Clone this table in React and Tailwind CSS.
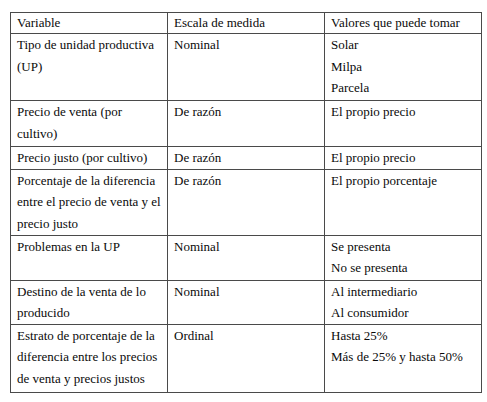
import React from "react";

const rows = [
  [["Tipo de unidad productiva (UP)"], ["Nominal"], ["Solar", "Milpa", "Parcela"]],
  [["Precio de venta (por cultivo)"], ["De razón"], ["El propio precio"]],
  [["Precio justo (por cultivo)"], ["De razón"], ["El propio precio"]],
  [["Porcentaje de la diferencia entre el precio de venta y el precio justo"], ["De razón"], ["El propio porcentaje"]],
  [["Problemas en la UP"], ["Nominal"], ["Se presenta", "No se presenta"]],
  [["Destino de la venta de lo producido"], ["Nominal"], ["Al intermediario", "Al consumidor"]],
  [["Estrato de porcentaje de la diferencia entre los precios de venta y precios justos"], ["Ordinal"], ["Hasta 25%", "Más de 25% y hasta 50%"]],
];

const rowHeights = ["h-[67px]", "h-[46px]", "h-[22px]", "h-[66px]", "h-[45px]", "h-[44px]", "h-[68px]"];

export default function App() {
  return (
    <div className="w-[487px] h-[402px] bg-white pt-[12px] pl-[10px] text-[13px] text-[#0a0a0a] font-['Liberation_Serif','Times_New_Roman',serif]">
      <table className="border-collapse table-fixed w-[471px] font-['Liberation_Serif','Times_New_Roman',serif]">
        <colgroup>
          <col className="w-[157px]" />
          <col className="w-[157px]" />
          <col className="w-[157px]" />
        </colgroup>
        <thead>
          <tr className="h-[21px]">
            <th className="border border-[#4a4a4a] font-normal text-left align-middle pl-[6px] pr-[4px] leading-[20px]">Variable</th>
            <th className="border border-[#4a4a4a] font-normal text-left align-middle pl-[6px] pr-[4px] leading-[20px]">Escala de medida</th>
            <th className="border border-[#4a4a4a] font-normal text-left align-middle pl-[6px] pr-[4px] leading-[20px]">Valores que puede tomar</th>
          </tr>
        </thead>
        <tbody>
          {rows.map((r, i) => (
            <tr key={i} className={rowHeights[i]}>
              {r.map((cell, j) => (
                <td key={j} className="border border-[#4a4a4a] align-top pl-[6px] pr-[4px] leading-[21.5px] pt-0 pb-0">
                  {cell.map((line, k) => (
                    <div key={k}>{line}</div>
                  ))}
                </td>
              ))}
            </tr>
          ))}
        </tbody>
      </table>
    </div>
  );
}
